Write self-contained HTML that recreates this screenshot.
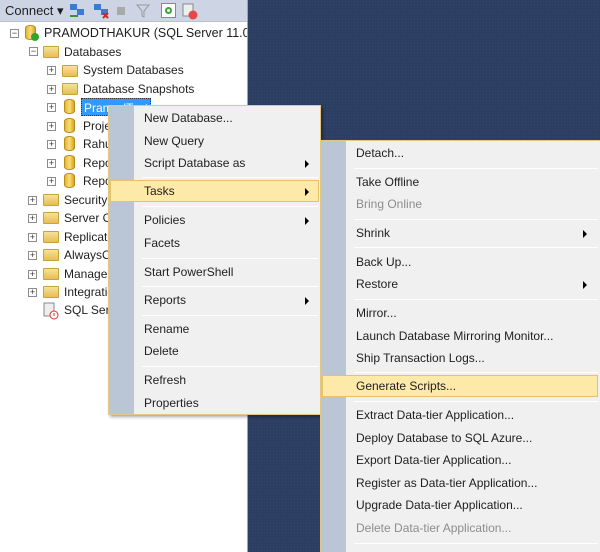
<!DOCTYPE html>
<html style="width:600px;height:552px;overflow:hidden"><head><meta charset="utf-8"><style>
*{margin:0;padding:0;box-sizing:border-box}
body{width:600px;height:552px;overflow:hidden;position:relative;background:#2c3d62;font-family:"Liberation Sans",sans-serif;font-size:12px;color:#1e1e1e}
.bg{position:absolute;left:248px;top:0;right:0;bottom:0;background-color:#2d3e63;background-image:radial-gradient(#34476f 0.6px,transparent 0.8px);background-size:3px 3px}
.left{position:absolute;left:0;top:0;width:248px;height:552px;background:#fff;border-right:1px solid #9aa5b8;overflow:hidden}
.tb{position:absolute;left:0;top:0;width:247px;height:22px;background:#cdd5e5;border-bottom:1px solid #b8c1d3}
.tb span{position:absolute;top:3px;font-size:13px}
.row{position:absolute;height:18px;line-height:18px;white-space:nowrap}
.pm{position:absolute;width:9px;height:9px;border:1px solid #8c8c8c;background:#fff;font-size:9px;line-height:7px;text-align:center;color:#333}
.fold{position:absolute;width:16px;height:12px;background:linear-gradient(#f7e19a,#e6be52);border:1px solid #c9a23c;border-radius:1px}
.db{position:absolute;width:11px;height:15px;background:linear-gradient(90deg,#e2b632,#f8dc7c,#d9a61e);border-radius:5px/3px;border:1px solid #b88d1c}
.menu{position:absolute;background:#f0f0f0;border:1px solid #e1c983;box-shadow:2px 2px 3px rgba(0,0,0,.35);overflow:hidden}
.gut{position:absolute;left:0;top:0;bottom:0;width:25px;background:#bac5d6}
.it{position:absolute;height:22px;line-height:22px;white-space:nowrap}
.sep{position:absolute;height:1px;background:#a5a5a5;border-bottom:1px solid #fff}
.hl{position:absolute;height:22px;background:#fde9a8;border:1px solid #e5c365}
.arr{position:absolute;width:0;height:0;border-left:4px solid #000;border-top:4px solid transparent;border-bottom:4px solid transparent}
.dis{color:#8d8d8d}
</style></head><body>
<div class="bg"></div>
<div class="left">
 <div class="tb">
  <span style="left:5px">Connect ▾</span>
  <svg style="position:absolute;left:68px;top:3px" width="18" height="16"><rect x="2" y="1" width="7" height="6" fill="#3a7bd5"/><rect x="9" y="6" width="7" height="6" fill="#3a7bd5"/><path d="M2 13h8" stroke="#2a9a2a" stroke-width="2"/></svg>
  <svg style="position:absolute;left:92px;top:3px" width="18" height="16"><rect x="2" y="1" width="7" height="6" fill="#3a7bd5"/><rect x="9" y="6" width="7" height="6" fill="#3a7bd5"/><path d="M11 10l5 5M16 10l-5 5" stroke="#d22" stroke-width="2"/></svg>
  <div style="position:absolute;left:117px;top:7px;width:8px;height:8px;background:#a9a9a9"></div>
  <svg style="position:absolute;left:136px;top:3px" width="14" height="16"><path d="M1 2h12l-5 6v6l-2-1v-5z" fill="none" stroke="#999"/></svg>
  <div style="position:absolute;left:161px;top:3px;width:15px;height:15px;background:#fff;border:1px solid #6a8ec0"><div style="margin:3px;width:7px;height:7px;border-radius:50%;border:2px solid #3ba33b"></div></div>
  <svg style="position:absolute;left:181px;top:2px" width="18" height="18"><rect x="2" y="2" width="10" height="12" fill="#eee" stroke="#888"/><circle cx="12" cy="13" r="4.5" fill="#e54848"/></svg>
 </div>
 <div class="pm" style="left:10px;top:29px">−</div>
 <div class="db" style="left:25px;top:25px"></div><div style="position:absolute;left:31px;top:33px;width:8px;height:8px;border-radius:50%;background:#2ea62e"></div>
 <div class="row" style="left:44px;top:24px;font-size:12.5px">PRAMODTHAKUR (SQL Server 11.0.22</div>
 <div class="pm" style="left:29px;top:47px">−</div><div class="fold" style="left:43px;top:46px"></div>
 <div class="row" style="left:64px;top:43px">Databases</div>
 <div class="pm" style="left:47px;top:66px">+</div><div class="fold" style="left:62px;top:65px"></div><div class="row" style="left:83px;top:61px">System Databases</div>
 <div class="pm" style="left:47px;top:85px">+</div><div class="fold" style="left:62px;top:83px"></div><div class="row" style="left:83px;top:80px">Database Snapshots</div>
 <div class="pm" style="left:47px;top:103px">+</div><div class="db" style="left:64px;top:99px"></div><div class="row" style="left:81px;top:98px;background:#3399ff;color:#fff;padding:0 2px;width:70px;border:1px dotted #333">PramodTest</div>
 <div class="pm" style="left:47px;top:122px">+</div><div class="db" style="left:64px;top:118px"></div><div class="row" style="left:83px;top:117px">Projects</div>
 <div class="pm" style="left:47px;top:140px">+</div><div class="db" style="left:64px;top:136px"></div><div class="row" style="left:83px;top:135px">Rahul</div>
 <div class="pm" style="left:47px;top:159px">+</div><div class="db" style="left:64px;top:155px"></div><div class="row" style="left:83px;top:154px">Reports</div>
 <div class="pm" style="left:47px;top:177px">+</div><div class="db" style="left:64px;top:173px"></div><div class="row" style="left:83px;top:172px">Reports</div>
 <div class="pm" style="left:28px;top:196px">+</div><div class="fold" style="left:43px;top:194px"></div><div class="row" style="left:64px;top:191px">Security</div>
 <div class="pm" style="left:28px;top:214px">+</div><div class="fold" style="left:43px;top:212px"></div><div class="row" style="left:64px;top:209px">Server Objects</div>
 <div class="pm" style="left:28px;top:233px">+</div><div class="fold" style="left:43px;top:231px"></div><div class="row" style="left:64px;top:228px">Replication</div>
 <div class="pm" style="left:28px;top:251px">+</div><div class="fold" style="left:43px;top:249px"></div><div class="row" style="left:64px;top:246px">AlwaysOn</div>
 <div class="pm" style="left:28px;top:270px">+</div><div class="fold" style="left:43px;top:268px"></div><div class="row" style="left:64px;top:265px">Management</div>
 <div class="pm" style="left:28px;top:288px">+</div><div class="fold" style="left:43px;top:286px"></div><div class="row" style="left:64px;top:283px">Integration</div>
 <svg style="position:absolute;left:42px;top:302px" width="18" height="18"><rect x="2" y="1" width="10" height="13" fill="#eee" stroke="#888"/><circle cx="12" cy="13" r="4" fill="#fff" stroke="#d33"/><path d="M12 11v3" stroke="#d33"/></svg>
 <div class="row" style="left:64px;top:301px">SQL Server Agent</div>
</div>

<div class="menu" style="left:108px;top:105px;width:213px;height:310px">
 <div class="gut"></div>
 <div class="it" style="left:35px;top:1px">New Database...</div>
 <div class="it" style="left:35px;top:24px">New Query</div>
 <div class="it" style="left:35px;top:46px">Script Database as</div><div class="arr" style="left:196px;top:54px"></div>
 <div class="sep" style="left:33px;top:71px;width:176px"></div>
 <div class="hl" style="left:1px;top:74px;width:209px"></div>
 <div class="it" style="left:35px;top:74px">Tasks</div><div class="arr" style="left:196px;top:82px"></div>
 <div class="sep" style="left:33px;top:100px;width:176px"></div>
 <div class="it" style="left:35px;top:103px">Policies</div><div class="arr" style="left:196px;top:111px"></div>
 <div class="it" style="left:35px;top:126px">Facets</div>
 <div class="sep" style="left:33px;top:152px;width:176px"></div>
 <div class="it" style="left:35px;top:155px">Start PowerShell</div>
 <div class="sep" style="left:33px;top:180px;width:176px"></div>
 <div class="it" style="left:35px;top:183px">Reports</div><div class="arr" style="left:196px;top:191px"></div>
 <div class="sep" style="left:33px;top:209px;width:176px"></div>
 <div class="it" style="left:35px;top:212px">Rename</div>
 <div class="it" style="left:35px;top:234px">Delete</div>
 <div class="sep" style="left:33px;top:260px;width:176px"></div>
 <div class="it" style="left:35px;top:263px">Refresh</div>
 <div class="it" style="left:35px;top:286px">Properties</div>
</div>

<div class="menu" style="left:320px;top:140px;width:282px;height:412px;box-shadow:none;border-bottom:none">
 <div class="gut"></div>
 <div class="it" style="left:35px;top:1px">Detach...</div>
 <div class="sep" style="left:33px;top:27px;width:244px"></div>
 <div class="it" style="left:35px;top:30px">Take Offline</div>
 <div class="it dis" style="left:35px;top:52px">Bring Online</div>
 <div class="sep" style="left:33px;top:78px;width:244px"></div>
 <div class="it" style="left:35px;top:81px">Shrink</div><div class="arr" style="left:262px;top:89px"></div>
 <div class="sep" style="left:33px;top:106px;width:244px"></div>
 <div class="it" style="left:35px;top:110px">Back Up...</div>
 <div class="it" style="left:35px;top:132px">Restore</div><div class="arr" style="left:262px;top:140px"></div>
 <div class="sep" style="left:33px;top:158px;width:244px"></div>
 <div class="it" style="left:35px;top:161px">Mirror...</div>
 <div class="it" style="left:35px;top:184px">Launch Database Mirroring Monitor...</div>
 <div class="it" style="left:35px;top:206px">Ship Transaction Logs...</div>
 <div class="sep" style="left:33px;top:231px;width:244px"></div>
 <div class="hl" style="left:1px;top:234px;width:276px"></div>
 <div class="it" style="left:35px;top:234px">Generate Scripts...</div>
 <div class="sep" style="left:33px;top:260px;width:244px"></div>
 <div class="it" style="left:35px;top:263px">Extract Data-tier Application...</div>
 <div class="it" style="left:35px;top:286px">Deploy Database to SQL Azure...</div>
 <div class="it" style="left:35px;top:308px">Export Data-tier Application...</div>
 <div class="it" style="left:35px;top:331px">Register as Data-tier Application...</div>
 <div class="it" style="left:35px;top:353px">Upgrade Data-tier Application...</div>
 <div class="it dis" style="left:35px;top:376px">Delete Data-tier Application...</div>
 <div class="sep" style="left:33px;top:402px;width:244px"></div>
 <div class="it" style="left:35px;top:405px">Import Data...</div>
</div>
</body></html>
